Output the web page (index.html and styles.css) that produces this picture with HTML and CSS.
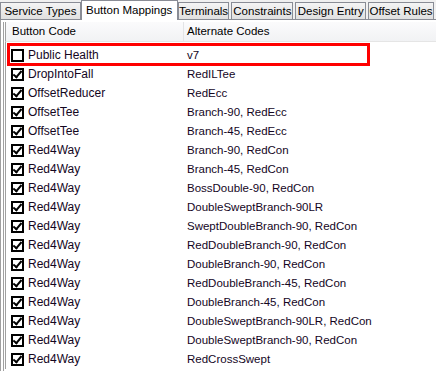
FILE: index.html
```html
<!DOCTYPE html>
<html lang="en">
<head>
    <meta charset="UTF-8">
    <title>Button Mappings</title>
    <link rel="stylesheet" href="styles.css">
</head>
<body>
    <div class="tabs">
        <div class="tab tab-service">Service Types</div>
        <div class="tab active tab-buttons">Button Mappings</div>
        <div class="tab tab-terminals">Terminals</div>
        <div class="tab tab-constraints">Constraints</div>
        <div class="tab tab-design">Design Entry</div>
        <div class="tab tab-offset">Offset Rules</div>
    </div>
    <div class="page">
        <div class="list">
            <div class="header">
                <div class="col-code">Button Code</div>
                <div class="col-alt">Alternate Codes</div>
            </div>
            <div class="rows">
                <div class="row selected">
                    <div class="col-code"><span class="check"></span>Public Health</div>
                    <div class="col-alt">v7</div>
                </div>
                <div class="row">
                    <div class="col-code"><span class="check on"></span>DropIntoFall</div>
                    <div class="col-alt">RedILTee</div>
                </div>
                <div class="row">
                    <div class="col-code"><span class="check on"></span>OffsetReducer</div>
                    <div class="col-alt">RedEcc</div>
                </div>
                <div class="row">
                    <div class="col-code"><span class="check on"></span>OffsetTee</div>
                    <div class="col-alt">Branch-90, RedEcc</div>
                </div>
                <div class="row">
                    <div class="col-code"><span class="check on"></span>OffsetTee</div>
                    <div class="col-alt">Branch-45, RedEcc</div>
                </div>
                <div class="row">
                    <div class="col-code"><span class="check on"></span>Red4Way</div>
                    <div class="col-alt">Branch-90, RedCon</div>
                </div>
                <div class="row">
                    <div class="col-code"><span class="check on"></span>Red4Way</div>
                    <div class="col-alt">Branch-45, RedCon</div>
                </div>
                <div class="row">
                    <div class="col-code"><span class="check on"></span>Red4Way</div>
                    <div class="col-alt">BossDouble-90, RedCon</div>
                </div>
                <div class="row">
                    <div class="col-code"><span class="check on"></span>Red4Way</div>
                    <div class="col-alt">DoubleSweptBranch-90LR</div>
                </div>
                <div class="row">
                    <div class="col-code"><span class="check on"></span>Red4Way</div>
                    <div class="col-alt">SweptDoubleBranch-90, RedCon</div>
                </div>
                <div class="row">
                    <div class="col-code"><span class="check on"></span>Red4Way</div>
                    <div class="col-alt">RedDoubleBranch-90, RedCon</div>
                </div>
                <div class="row">
                    <div class="col-code"><span class="check on"></span>Red4Way</div>
                    <div class="col-alt">DoubleBranch-90, RedCon</div>
                </div>
                <div class="row">
                    <div class="col-code"><span class="check on"></span>Red4Way</div>
                    <div class="col-alt">RedDoubleBranch-45, RedCon</div>
                </div>
                <div class="row">
                    <div class="col-code"><span class="check on"></span>Red4Way</div>
                    <div class="col-alt">DoubleBranch-45, RedCon</div>
                </div>
                <div class="row">
                    <div class="col-code"><span class="check on"></span>Red4Way</div>
                    <div class="col-alt">DoubleSweptBranch-90LR, RedCon</div>
                </div>
                <div class="row">
                    <div class="col-code"><span class="check on"></span>Red4Way</div>
                    <div class="col-alt">DoubleSweptBranch-90, RedCon</div>
                </div>
                <div class="row">
                    <div class="col-code"><span class="check on"></span>Red4Way</div>
                    <div class="col-alt">RedCrossSwept</div>
                </div>
            </div>
        </div>
    </div>
</body>
</html>
```

FILE: styles.css
```css
body {
    margin: 0;
    font-family: "Liberation Sans", Arial, sans-serif;
    font-size: 12px;
    color: #000;
    background-color: #ffffff;
    width: 436px;
    height: 371px;
    overflow: hidden;
}
.tabs {
    display: flex;
    height: 20px;
    background-color: #f0f0f0;
    border-bottom: 1px solid #898c95;
    box-sizing: border-box;
    padding-top: 2px;
}
.tab {
    height: 17px;
    box-sizing: border-box;
    margin-right: 2px;
    border: 1px solid #898c95;
    border-bottom: none;
    background: linear-gradient(#f4f4f4, #e0e0e0);
    line-height: 16px;
    font-size: 11.5px;
    text-align: center;
    white-space: nowrap;
}
.tab-service { width: 81px; margin-right: 0; }
.tab-buttons { width: 97px; margin-right: 0; }
.tab-terminals { width: 52px; }
.tab-constraints { width: 62px; }
.tab-design { width: 71px; }
.tab-offset { width: 66px; }
.tab.active {
    background: #ffffff;
    margin-top: -2px;
    height: 20px;
    line-height: 19px;
    border-color: #898c95;
    position: relative;
}
.page {
    border-left: 1px solid #a0a0a0;
    padding-left: 2px;
    padding-top: 1px;
    height: 351px;
    box-sizing: border-box;
}
.list {
    border-left: 1px solid #a0a0a0;
    padding-left: 1px;
    height: 100%;
}
.list .rows, .list .header {
    border-left: 1px solid #a0a0a0;
}
.header {
    display: flex;
    height: 19px;
    margin-top: 1px;
    background: linear-gradient(#fbfbfc, #f1f2f4);
    border-bottom: 1px solid #e5e5e5;
    line-height: 19px;
    font-size: 11.5px;
}
.header .col-code {
    width: 178px;
    box-sizing: border-box;
    padding-left: 6px;
    border-right: 1px solid #e3e4e6;
}
.header .col-alt {
    padding-left: 3px;
}
.rows {
    padding-top: 4px;
}
.row {
    display: flex;
    height: 19px;
    line-height: 19px;
    color: #14061e;
    position: relative;
}
.row .col-code {
    width: 176px;
    display: flex;
    align-items: center;
    padding-left: 5px;
}
.row .col-alt {
    font-size: 11.5px;
}
.row.selected::after {
    content: "";
    position: absolute;
    left: 1px;
    top: -3px;
    width: 363px;
    height: 23px;
    border: 3px solid #ff0000;
    box-sizing: border-box;
}
.check {
    width: 13px;
    height: 13px;
    border: 2px solid #000;
    box-sizing: border-box;
    margin-right: 4px;
    position: relative;
    background-color: #fff;
}
.check.on::after {
    content: "";
    position: absolute;
    left: 2px;
    top: -1px;
    width: 3px;
    height: 7px;
    border: solid #000;
    border-width: 0 2px 2px 0;
    transform: rotate(40deg);
}
```
